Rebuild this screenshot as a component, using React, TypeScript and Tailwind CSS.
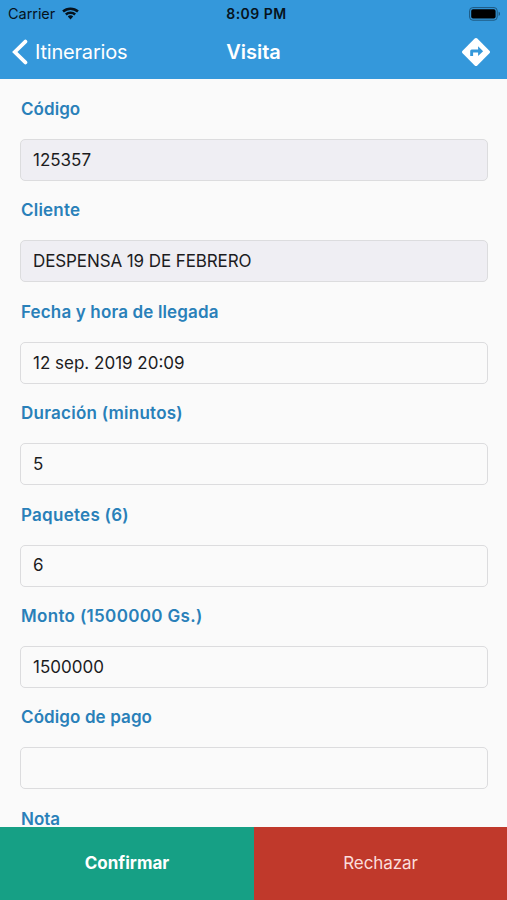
import React from 'react';

const FIELDS = [
  { label: 'Código', value: '125357', disabled: true, tracking: 'tracking-[0.05px]' },
  { label: 'Cliente', value: 'DESPENSA 19 DE FEBRERO', disabled: true, tracking: 'tracking-[0.2px]', valueTracking: 'tracking-[-0.1px]' },
  { label: 'Fecha y hora de llegada', value: '12 sep. 2019 20:09', tracking: 'tracking-[0.15px]' },
  { label: 'Duración (minutos)', value: '5', tracking: 'tracking-[0.25px]' },
  { label: 'Paquetes (6)', value: '6', tracking: 'tracking-[0.27px]' },
  { label: 'Monto (1500000 Gs.)', value: '1500000', tracking: 'tracking-[0.33px]' },
  { label: 'Código de pago', value: '', tracking: 'tracking-[0.1px]' },
];

function WifiIcon() {
  return (
    <svg className="w-[17px] h-[13px]" viewBox="0 0 17 13" fill="#06131d">
      <path d="M8.5.4c3.200 0 6.100 1.200 8.300 3.200l-1.700 1.900a9.700 9.700 0 00-13.200 0L.2 3.600A12 12 0 018.500.4z" />
      <path d="M8.500 4.400c2.100 0 4 .800 5.500 2.100l-1.700 1.900a5.600 5.600 0 00-7.600 0L3 6.500a8 8 0 015.500-2.100z" />
      <path d="M8.500 8.300c1.100 0 2 .400 2.700 1.100L8.500 12.400 5.800 9.400c.700-.700 1.600-1.100 2.700-1.100z" />
    </svg>
  );
}

function BatteryIcon() {
  return (
    <svg className="w-[32px] h-[14px]" viewBox="0 0 32 14" fill="none">
      <rect x="0.6" y="0.6" width="27.6" height="12.6" rx="3.2" stroke="#1d587f" strokeWidth="1" />
      <rect x="2.2" y="2.2" width="24.4" height="9.4" rx="1.8" fill="#000" />
      <path d="M29.6 4.8c1.9.6 1.9 3.6 0 4.2z" fill="#1d587f" />
    </svg>
  );
}

function DirectionsIcon() {
  return (
    <svg className="w-[28px] h-[28px]" viewBox="0 0 28 28" fill="none">
      <path d="M12.7.6a1.9 1.9 0 012.6 0l12.1 12.1a1.9 1.9 0 010 2.6L15.3 27.4a1.9 1.9 0 01-2.6 0L.6 15.3a1.9 1.9 0 010-2.6z" fill="#fff" />
      <path d="M8.2 18v-4.900a1.500 1.500 0 011.500-1.500h6.400V8.300l5 4.900-5 4.900v-3.700h-5V18z" fill="#3498db" />
    </svg>
  );
}

export default function App() {
  return (
    <div className="w-full h-[900px] flex flex-col overflow-hidden bg-[#fafafa] font-['Inter','Liberation_Sans',sans-serif]">
      <header className="h-[79px] shrink-0 bg-[#3498db]">
        <div className="h-[27px] grid grid-cols-3 items-center pl-2 pr-[6px] text-[#06131d]">
          <div className="flex items-center gap-[7px]">
            <span className="text-[14.5px] leading-5 tracking-[-0.05px]">Carrier</span>
            <WifiIcon />
          </div>
          <span className="pl-1 text-center text-[14px] leading-5 font-semibold tracking-[0.5px]">8:09 PM</span>
          <div className="flex justify-end">
            <BatteryIcon />
          </div>
        </div>
        <div className="h-[50px] grid grid-cols-3 items-center pl-3 pr-[17px] text-white">
          <div className="flex items-center gap-[7px]">
            <svg className="w-[16px] h-[26px]" viewBox="0 0 16 26" fill="none" stroke="#fff" strokeWidth="3.8" strokeLinecap="round">
              <path d="M13.4 2.6L2.8 13l10.6 10.4" />
            </svg>
            <span className="text-[20px] leading-6 tracking-[-0.2px]">Itinerarios</span>
          </div>
          <span className="pl-[5px] text-center text-[20px] leading-6 font-semibold">Visita</span>
          <div className="flex justify-end">
            <DirectionsIcon />
          </div>
        </div>
      </header>

      <main className="flex-1 min-h-0 overflow-hidden pt-5 pl-5 pr-[19px]">
        {FIELDS.map((field) => (
          <div key={field.label} className="h-[101.4px]">
            <div className={`text-[17px] leading-5 pl-px font-semibold text-[#2980b9] ${field.tracking}`}>{field.label}</div>
            <div
              className={`mt-5 h-[42px] flex items-center rounded-[5px] border border-[#dcdcde] px-3 pt-px text-[17px] text-[#1c1c1e] ${
                field.disabled ? 'bg-[#efeef3]' : 'bg-[#fafafa]'
              } ${field.valueTracking ?? ''}`}
            >
              {field.value}
            </div>
          </div>
        ))}
        <div className="text-[17px] leading-[17px] pt-[2px] pl-px font-semibold text-[#2980b9]">Nota</div>
      </main>

      <footer className="h-[73px] shrink-0 flex text-[17px] text-white">
        <button className="w-[254px] bg-[#16a085] font-bold">Confirmar</button>
        <button className="flex-1 bg-[#c0392b] text-[#fbdedb] tracking-[-0.1px]">Rechazar</button>
      </footer>
    </div>
  );
}
